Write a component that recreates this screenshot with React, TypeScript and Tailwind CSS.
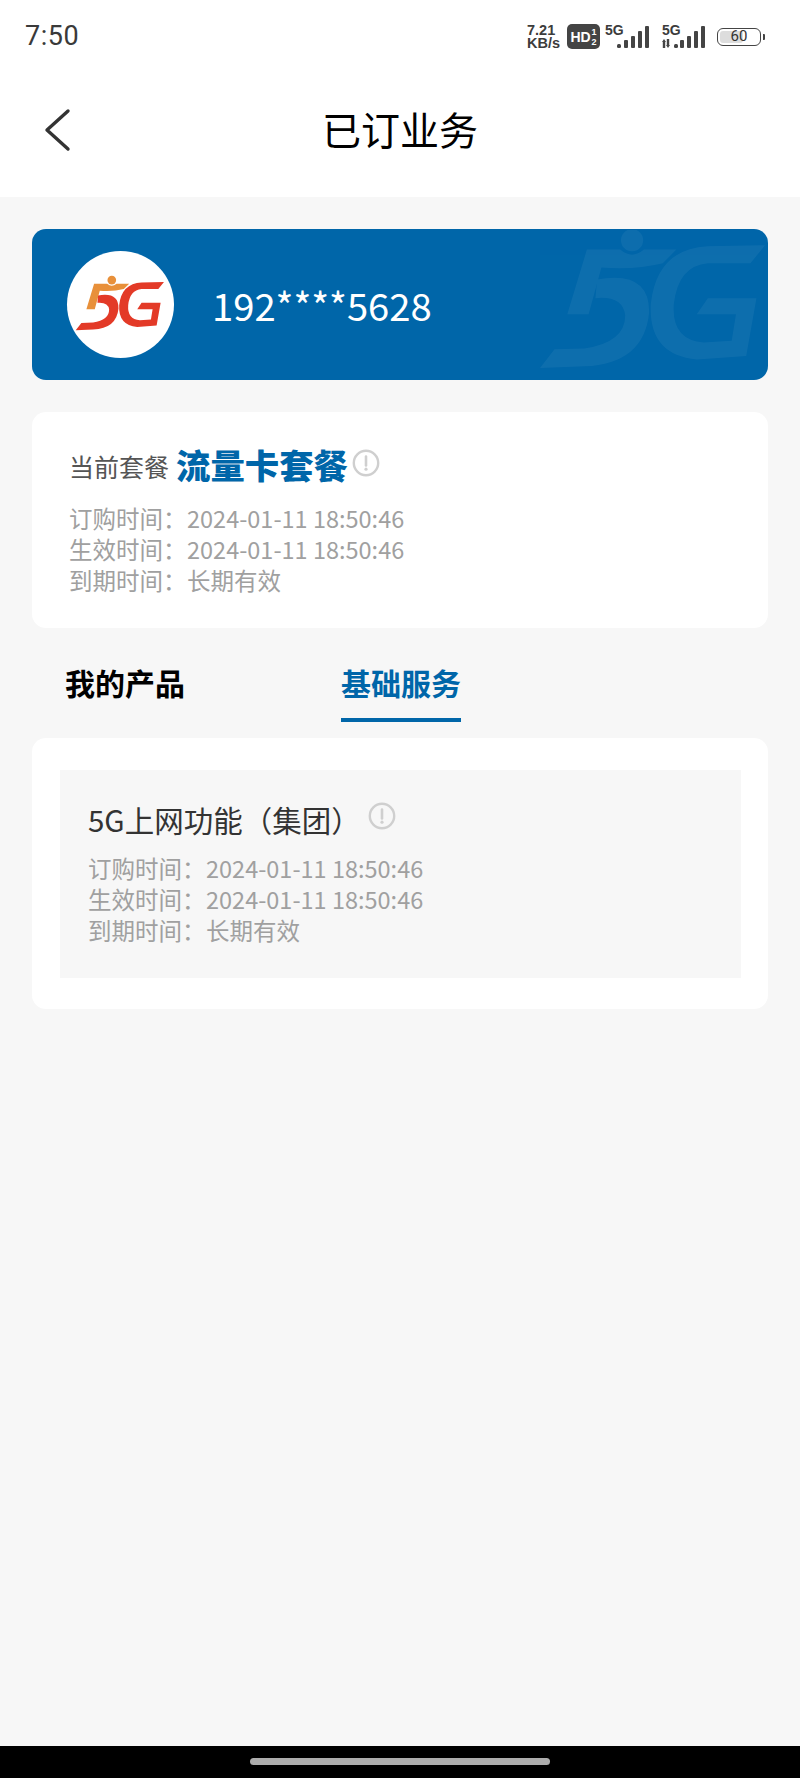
const cjk = "font-['Noto_Sans_CJK_SC','Noto_Sans',sans-serif]";

function LogoMark({ plain }: { plain?: boolean }) {
  // 同一个标志：plain 时用作横幅水印
  const orange = plain ? "#ffffff" : "#e8903a";
  const red = plain ? "#ffffff" : "#e33a27";
  return (
    <>
      <circle cx="186" cy="120" r="13" fill={orange} />
      <path d="M133 131 L172 131 Q186 143 200 131 L238 131 L222 147 Q190 155 150 152 L135 207 L110 207 Z" fill={orange} />
      <path d="M145 166 Q207 155 206 205 Q200 265 130 268 L78 270 L95 248 L130 247 Q178 240 178 208 Q175 185 143 188 Z" fill={red} />
      <path d="M342 126 L325 147 L275 147 Q240 150 235 195 Q232 237 270 240 L303 238 L308 207 L262 207 L275 188 L332 188 L320 256 L262 260 Q205 255 208 195 Q215 130 275 127 Z" fill={red} />
    </>
  );
}

function InfoIcon() {
  return (
    <svg width="28" height="28" viewBox="0 0 28 28" fill="none" className="shrink-0">
      <circle cx="14" cy="14" r="12.2" stroke="#cfcfcf" strokeWidth="2.4" />
      <path d="M14 7.5 L14 16.5" stroke="#cfcfcf" strokeWidth="2.6" strokeLinecap="round" />
      <circle cx="14" cy="20.2" r="1.6" fill="#cfcfcf" />
    </svg>
  );
}

function Signal({ arrows }: { arrows?: boolean }) {
  return (
    <div className={`relative h-[24px] ${arrows ? "w-[47px]" : "w-[44px]"}`}>
      <span className="absolute left-0 -top-[1px] text-[14px] leading-[13px] font-semibold text-[#3c3c3c] font-['Liberation_Sans',sans-serif]">
        5G
      </span>
      <svg width={arrows ? 47 : 44} height="24" viewBox={arrows ? "0 0 47 24" : "0 0 44 24"} className="absolute inset-0">
        <g fill="#444444" transform={arrows ? "translate(3 0)" : "translate(0 0)"}>
          {arrows && (
            <path d="M1 14 L3 17 L2.2 17 L2.2 23 L-0.2 23 L-0.2 17 L-1 17 Z M5 23 L3 20 L3.8 20 L3.8 14 L6.2 14 L6.2 20 L7 20 Z" transform="translate(-2 0)" />
          )}
          <rect x={arrows ? 9 : 12} y="19" width="4" height="4" rx="1.5" />
          <rect x={arrows ? 15 : 19} y="15" width="4" height="8" rx="1" />
          <rect x={arrows ? 22 : 26} y="11" width="4" height="12" rx="1" />
          <rect x={arrows ? 29 : 33} y="6" width="4" height="17" rx="1" />
          <rect x={arrows ? 36 : 40} y="1" width="4" height="22" rx="1" />
        </g>
      </svg>
    </div>
  );
}

function StatusBar() {
  return (
    <div className="flex h-[70px] items-start justify-between pl-[25px] pr-[35px] pt-[17px]">
      <span className="text-[27px] leading-[38px] text-[#3a3a3a] font-['Roboto',sans-serif] tracking-[0.5px]">7:50</span>
      <div className="flex items-center gap-[5px] pt-[7px] font-['Liberation_Sans',sans-serif] text-[#3c3c3c]">
        <div className="flex w-[35px] flex-col text-[14.5px] leading-[12.5px] font-bold">
          <span>7.21</span>
          <span>KB/s</span>
        </div>
        <div className="flex h-[25px] w-[33px] items-center justify-center gap-[1px] rounded-[5px] bg-[#444444] text-white">
          <span className="text-[14px] font-bold leading-none">HD</span>
          <span className="flex flex-col text-[9px] font-bold leading-[10px]">
            <span>1</span>
            <span>2</span>
          </span>
        </div>
        <Signal />
        <div className="w-[3px]" />
        <Signal arrows />
        <div className="ml-[3px] flex items-center gap-[2px]">
          <div className="relative flex h-[18px] w-[44px] items-center overflow-hidden rounded-[6px] border-[1.5px] border-[#444444] p-[2px]">
            <div className="h-full w-[60%] rounded-[3px] bg-[#dddddd]" />
            <span className="absolute inset-0 text-center text-[15px] leading-[15px] text-[#333333] font-['Roboto',sans-serif]">60</span>
          </div>
          <div className="h-[6px] w-[2px] rounded-r-[1px] bg-[#444444]" />
        </div>
      </div>
    </div>
  );
}

function Dates({ end }: { end?: string }) {
  const rows = [
    ["订购时间：", "2024-01-11 18:50:46"],
    ["生效时间：", "2024-01-11 18:50:46"],
    ["到期时间：", end ?? "长期有效"],
  ];
  return (
    <div className="text-[23.5px] leading-[31px] text-[#a0a0a0]">
      {rows.map(([label, value]) => (
        <div key={label} className="flex">
          <span className="w-[118px]">{label}</span>
          <span>{value}</span>
        </div>
      ))}
    </div>
  );
}

export default function App() {
  return (
    <div className={`flex h-[1778px] w-[800px] flex-col overflow-hidden bg-[#f7f7f7] ${cjk}`}>
      <header className="h-[197px] bg-white">
        <StatusBar />
        <div className="relative flex h-[122px] items-center justify-center pb-[6px]">
          <svg width="30" height="44" viewBox="0 0 30 44" fill="none" className="absolute left-[43px] top-[38px]">
            <path d="M25 3 L4 22 L25 41" stroke="#333333" strokeWidth="3.4" strokeLinecap="round" strokeLinejoin="round" />
          </svg>
          <h1 className="text-[39px] leading-[52px] text-black">已订业务</h1>
        </div>
      </header>

      <main className="flex flex-1 flex-col px-[32px] pt-[32px]">
        <section className="relative flex h-[151px] items-center overflow-hidden rounded-[14px] bg-[#0066a9] pl-[35px]">
          <svg width="225" height="138" viewBox="78 108 264 162" className="absolute left-[508px] top-[1px] opacity-[0.05]">
            <LogoMark plain />
          </svg>
          <div className="flex h-[107px] w-[107px] items-center justify-center rounded-full bg-white">
            <svg width="107" height="107" viewBox="52 33 320 320">
              <LogoMark />
            </svg>
          </div>
          <span className="ml-[38px] text-[38.2px] leading-[52px] text-white">192****5628</span>
        </section>

        <section className="mt-[32px] h-[216px] rounded-[14px] bg-white pl-[37px] pt-[28px]">
          <div className="flex h-[50px] items-center">
            <span className="mt-[2px] text-[25px] leading-[36px] text-[#555555]">当前套餐</span>
            <span className="-mt-[3px] ml-[7px] text-[34.4px] font-black leading-[46px] text-[#0066a9]">流量卡套餐</span>
            <span className="-mt-[4px] ml-[4px]">
              <InfoIcon />
            </span>
          </div>
          <div className="mt-[13px]">
            <Dates />
          </div>
        </section>

        <nav className="flex h-[110px] pl-[33px] pt-[31px]">
          <div className="w-[276px] text-[30px] font-bold leading-[46px] text-black">我的产品</div>
          <div className="h-[63px] border-b-[4px] border-[#0066a9] text-[30px] font-bold leading-[46px] text-[#0066a9]">基础服务</div>
        </nav>

        <section className="h-[271px] rounded-[14px] bg-white py-[32px] pl-[28px] pr-[27px]">
          <div className="h-[208px] bg-[#f7f7f7] pl-[28px] pt-[27px]">
            <div className="flex h-[44px] items-center">
              <span className="text-[29.5px] leading-[40px] text-[#333333]">5G上网功能（集团）</span>
              <span className="-mt-[6px] ml-[7px]">
                <InfoIcon />
              </span>
            </div>
            <div className="mt-[12px]">
              <Dates />
            </div>
          </div>
        </section>
      </main>

      <footer className="flex h-[32px] items-start justify-center bg-black pt-[12px]">
        <div className="h-[7px] w-[300px] rounded-full bg-[#adadad]" />
      </footer>
    </div>
  );
}
